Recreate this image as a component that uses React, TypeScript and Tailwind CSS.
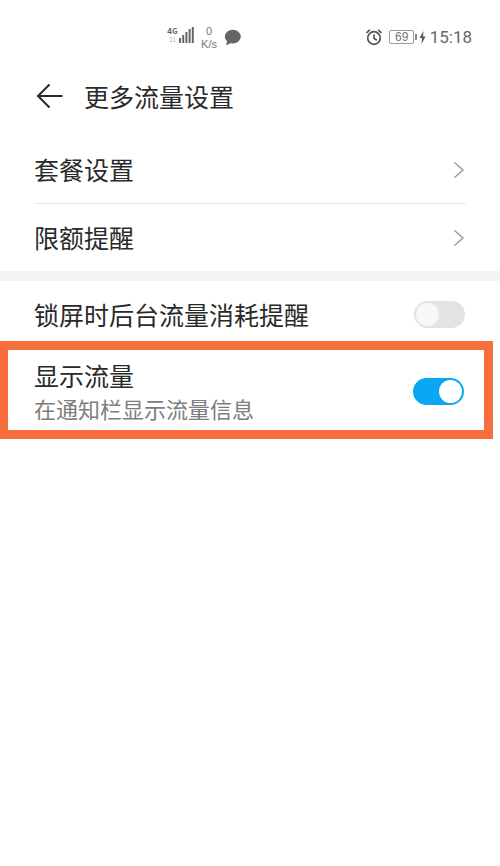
import React from 'react';

const font = { fontFamily: '"Noto Sans CJK SC", "Liberation Sans", sans-serif' };

const Chevron: React.FC = () => (
    <svg width="12" height="18" viewBox="0 0 12 18" fill="none" stroke="#9a9a9a" strokeWidth="1.5" className="mr-[1px]">
        <path d="M1.5 1.5 L10 9 L1.5 16.5" />
    </svg>
);

const Toggle: React.FC<{ on: boolean; className?: string }> = ({ on, className }) => (
    <div className={`w-[51px] h-[27px] rounded-full p-[2px] flex ${on ? 'bg-[#0aa8f4] justify-end' : 'bg-[#e3e3e3] justify-start'} ${className ?? ''}`}>
        <div className={`w-[23px] h-[23px] rounded-full ${on ? 'bg-white' : 'bg-[#f7f7f7]'}`}></div>
    </div>
);

const StatusBar: React.FC = () => (
    <div className="h-[60px] flex text-[#777777]">
        <div className="ml-[167px] mt-[26px] flex items-start">
            <div className="w-[11px] flex flex-col items-center leading-none">
                <span className="text-[8px] font-bold text-[#666666] leading-[10px]">4G</span>
                <span className="text-[6px] text-[#aaaaaa] leading-[8px]">11</span>
            </div>
            <svg width="15" height="17" viewBox="0 0 15 17" className="ml-[1px]" fill="#666666">
                <rect x="0" y="12" width="2" height="5" />
                <rect x="3.2" y="9" width="2" height="8" />
                <rect x="6.4" y="6" width="2" height="11" />
                <rect x="9.6" y="3" width="2" height="14" />
                <rect x="12.8" y="1" width="2" height="16" />
            </svg>
        </div>
        <div className="ml-[5px] mt-[25px] w-[20px] flex flex-col items-center text-[11px] leading-[13px] text-[#777777]" style={{ fontFamily: '"Liberation Sans", sans-serif' }}>
            <span>0</span>
            <span>K/s</span>
        </div>
        <svg width="17" height="17" viewBox="0 0 17 17" className="ml-[5px] mt-[29px]" fill="#666666">
            <ellipse cx="8.8" cy="7.6" rx="8" ry="6.8" />
            <path d="M3.5 11 L2 16.5 L8 13.5 Z" />
        </svg>
        <div className="ml-auto mr-[28px] mt-[27px] h-[20px] flex items-center">
            <svg width="18" height="18" viewBox="0 0 18 18" fill="none" stroke="#555555" strokeWidth="1.7">
                <circle cx="9" cy="10" r="6.3" />
                <path d="M9 6.5 V10.3 L11.8 12.3" />
                <path d="M1.5 4.8 L4.8 1.8 M16.5 4.8 L13.2 1.8" />
            </svg>
            <div className="ml-[6px] w-[25px] h-[14px] border border-[#9a9a9a] rounded-[2px] flex items-center justify-center text-[12px] leading-none text-[#777777]" style={{ fontFamily: '"Liberation Sans", sans-serif' }}>69</div>
            <div className="w-[1.5px] h-[6px] bg-[#888888] ml-[1px]"></div>
            <svg width="7" height="13" viewBox="0 0 7 13" className="ml-[2px]" fill="#555555">
                <path d="M4.5 0 L0.5 7 H3 L2.5 13 L6.5 5.5 H4 Z" />
            </svg>
            <span className="ml-[4px] text-[17px] leading-none text-[#666666]" style={{ fontFamily: 'Roboto, sans-serif' }}>15:18</span>
        </div>
    </div>
);

const LinkRow: React.FC<{ title: string; divider?: boolean; height: string }> = ({ title, divider, height }) => (
    <div className={`${height} mx-[34px] flex items-center justify-between ${divider ? 'border-b border-[#e9e9e9]' : ''}`}>
        <span className="text-[25px] leading-none text-[#2a2a2a]">{title}</span>
        <Chevron />
    </div>
);

export default function App() {
    return (
        <div className="w-[500px] h-[866px] bg-white overflow-hidden" style={font}>
            <StatusBar />
            <div className="h-[76px] pl-[36px] pb-[4px] flex items-center">
                <svg width="27" height="26" viewBox="0 0 27 26" fill="none" stroke="#2a2a2a" strokeWidth="2">
                    <path d="M13.5 1.5 L2 13 L13.5 24.5" />
                    <path d="M2 13 H26.5" />
                </svg>
                <span className="ml-[21px] text-[25px] leading-none text-[#2a2a2a]">更多流量设置</span>
            </div>
            <LinkRow title="套餐设置" divider height="h-[68px]" />
            <LinkRow title="限额提醒" height="h-[67px]" />
            <div className="h-[10px] bg-[#f3f3f3]"></div>
            <div className="h-[60px] pt-[6px] pl-[34px] pr-[35px] flex items-center justify-between">
                <span className="text-[25px] leading-none text-[#2a2a2a]">锁屏时后台流量消耗提醒</span>
                <Toggle on={false} />
            </div>
            <div className="w-[493px] h-[98px] border-l-[8px] border-r-[9px] border-t-[9px] border-b-[9px] border-[#f76d3c] pl-[26px] pr-[20px] flex items-center justify-between">
                <div className="flex flex-col pt-[4px]">
                    <span className="text-[25px] leading-[32px] text-[#2a2a2a]">显示流量</span>
                    <span className="text-[22px] leading-[34px] text-[#7d7d7d]">在通知栏显示流量信息</span>
                </div>
                <Toggle on className="mt-[3px]" />
            </div>
        </div>
    );
}
